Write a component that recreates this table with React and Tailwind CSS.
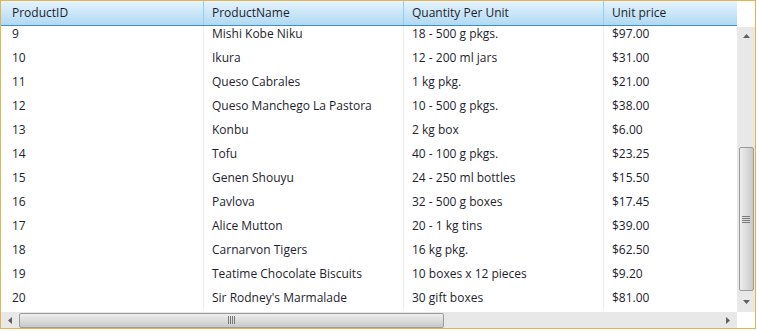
import React from 'react';

const rows = [
  [9, 'Mishi Kobe Niku', '18 - 500 g pkgs.', '$97.00'],
  [10, 'Ikura', '12 - 200 ml jars', '$31.00'],
  [11, 'Queso Cabrales', '1 kg pkg.', '$21.00'],
  [12, 'Queso Manchego La Pastora', '10 - 500 g pkgs.', '$38.00'],
  [13, 'Konbu', '2 kg box', '$6.00'],
  [14, 'Tofu', '40 - 100 g pkgs.', '$23.25'],
  [15, 'Genen Shouyu', '24 - 250 ml bottles', '$15.50'],
  [16, 'Pavlova', '32 - 500 g boxes', '$17.45'],
  [17, 'Alice Mutton', '20 - 1 kg tins', '$39.00'],
  [18, 'Carnarvon Tigers', '16 kg pkg.', '$62.50'],
  [19, 'Teatime Chocolate Biscuits', '10 boxes x 12 pieces', '$9.20'],
  [20, "Sir Rodney's Marmalade", '30 gift boxes', '$81.00'],
];

const columns = ['ProductID', 'ProductName', 'Quantity Per Unit', 'Unit price'];

const Arrow = ({ dir }) => {
  const shapes = {
    up: '0,4 3.5,0 7,4',
    down: '0,0 3.5,4 7,0',
    left: '4,0 0,3.5 4,7',
    right: '0,0 4,3.5 0,7',
  };
  const vertical = dir === 'up' || dir === 'down';
  return (
    <svg width={vertical ? 7 : 4} height={vertical ? 4 : 7} className="block">
      <polygon points={shapes[dir]} fill="#606060" />
    </svg>
  );
};

const Grip = ({ vertical }) => (
  <svg width={vertical ? 8 : 7} height={vertical ? 7 : 8} className="block">
    {[0, 2, 4, 6].map((o) =>
      vertical ? (
        <rect key={o} x="0" y={o} width="8" height="1" fill="#7a7a7a" />
      ) : (
        <rect key={o} x={o} y="0" width="1" height="8" fill="#7a7a7a" />
      )
    )}
  </svg>
);

export default function App() {
  return (
    <div className="w-[757px] h-[331px] bg-white overflow-hidden" style={{ fontFamily: '"Open Sans", "Noto Sans", sans-serif' }}>
      <div className="w-[756px] h-[329px] border border-[#e2b552] flex flex-col">
        <div className="flex flex-1 min-h-0">
          <div className="flex-1 flex flex-col min-w-0 overflow-hidden">
            <div className="h-[25px] flex pl-[3px] bg-gradient-to-b from-[#e6f4fd] to-[#b0d9f3] border-b border-[#3f8fd2]">
              {columns.map((c, i) => (
                <div
                  key={c}
                  className={`w-[200px] shrink-0 flex items-center pl-[8px] text-[12px] text-[#1e1e2e] ${i < 3 ? 'border-r border-[#9ccaec]' : ''}`}
                >
                  {c}
                </div>
              ))}
            </div>
            <div className="flex-1 overflow-hidden">
              <div className="-mt-[4px] pl-[3px]">
                {rows.map((r) => (
                  <div key={r[0]} className="h-[24px] flex text-[12px] text-[#1e1e2e]">
                    {r.map((cell, i) => (
                      <div
                        key={i}
                        className={`w-[200px] shrink-0 flex items-center pl-[8px] ${i < 3 ? 'border-r border-[#ececec]' : ''}`}
                      >
                        {cell}
                      </div>
                    ))}
                  </div>
                ))}
              </div>
            </div>
          </div>
          <div className="w-[18px] flex flex-col">
            <div className="h-[26px] bg-white" />
            <div className="flex-1 bg-[#e8e8e8] flex flex-col items-center">
              <div className="h-[18px] flex items-center justify-center">
                <Arrow dir="up" />
              </div>
              <div className="h-[102px]" />
              <div className="w-[15px] h-[144px] rounded-[2px] border border-[#9c9c9c] bg-gradient-to-r from-[#eeeeee] via-[#dcdcdc] to-[#c8c8c8] flex items-center justify-center">
                <Grip vertical />
              </div>
              <div className="flex-1 flex items-center justify-center">
                <Arrow dir="down" />
              </div>
            </div>
          </div>
        </div>
        <div className="h-[16px] flex">
          <div className="flex-1 bg-[#e8e8e8] flex items-center">
            <div className="w-[18px] flex items-center justify-center">
              <Arrow dir="left" />
            </div>
            <div className="w-[425px] h-[15px] rounded-[2px] border border-[#9c9c9c] bg-gradient-to-b from-[#eeeeee] via-[#dcdcdc] to-[#c8c8c8] flex items-center justify-center">
              <Grip />
            </div>
            <div className="flex-1" />
            <div className="w-[18px] flex items-center justify-center">
              <Arrow dir="right" />
            </div>
          </div>
          <div className="w-[18px] bg-white" />
        </div>
      </div>
    </div>
  );
}
